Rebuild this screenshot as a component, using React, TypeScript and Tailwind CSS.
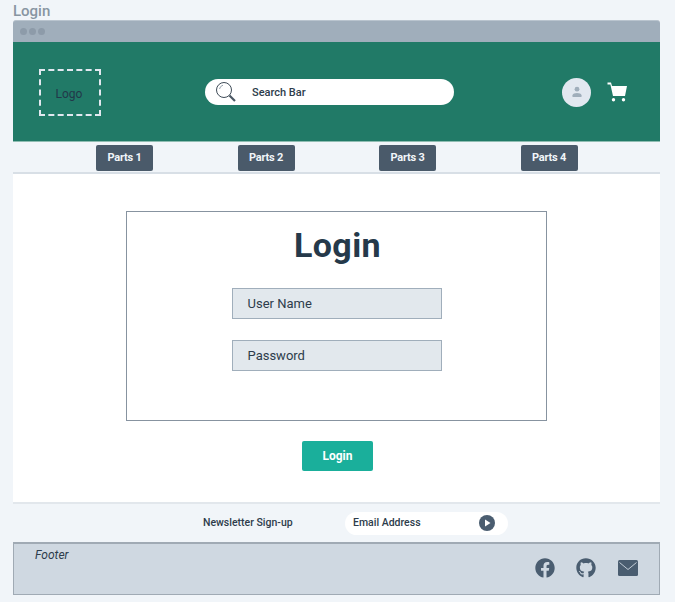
import React from 'react'
import { FaFacebook, FaGithub } from 'react-icons/fa'

const parts = ['Parts 1', 'Parts 2', 'Parts 3', 'Parts 4']

const SearchIcon = () => (
  <svg width="22" height="22" viewBox="0 0 22 22" fill="none">
    <circle cx="9" cy="9" r="7.5" stroke="#3f4c58" strokeWidth="1" />
    <path d="M4.5 8 A5 5 0 0 1 8 4.2" stroke="#9aa5af" strokeWidth="1" />
    <path d="M14.5 14.5 L20 20" stroke="#4a5763" strokeWidth="2.2" />
  </svg>
)

const CartIcon = () => (
  <svg width="20" height="20" viewBox="0 0 20 20" fill="#fff">
    <path d="M0.5 0.5 H4 L5 4 H20 L18 14 H6 L3.4 2.4 H0.5 Z" />
    <circle cx="6.5" cy="17.8" r="1.7" />
    <circle cx="16.5" cy="17.8" r="1.7" />
  </svg>
)

const UserIcon = () => (
  <svg width="12" height="12" viewBox="0 0 12 12" fill="#a0aebb">
    <circle cx="6" cy="3.2" r="2.4" />
    <path d="M1.5 11 V9.3 C1.5 7.8 4 7 6 7 C8 7 10.5 7.8 10.5 9.3 V11 Z" />
  </svg>
)

const MailIcon = () => (
  <svg width="20" height="16" viewBox="0 0 20 16">
    <rect width="20" height="16" rx="1.5" fill="#4a5d70" />
    <path d="M1.5 2.5 L10 9.5 L18.5 2.5" fill="none" stroke="#cfd8e1" strokeWidth="0.9" />
  </svg>
)

const PlayIcon = () => (
  <svg width="16" height="16" viewBox="0 0 16 16">
    <circle cx="8" cy="8" r="8" fill="#4a5d70" />
    <path d="M6 4.5 L11.5 8 L6 11.5 Z" fill="#fff" />
  </svg>
)

export default function App() {
  return (
    <div className="w-[675px] h-[602px] overflow-hidden bg-[#f1f5f9] pl-[13px] pr-[15px] font-['Roboto',sans-serif]">
      <div className="h-5 text-[15px] leading-[22px] font-medium text-[#8895a2]">Login</div>

      <div className="h-[22px] bg-[#a0aebb] rounded-t-[3px] border-t border-[#b9c4ce] flex items-center gap-[2px] pl-[7px] w-[647px]">
        <span className="w-[7px] h-[7px] rounded-full bg-[#8d9ba9]" />
        <span className="w-[7px] h-[7px] rounded-full bg-[#8d9ba9]" />
        <span className="w-[7px] h-[7px] rounded-full bg-[#8d9ba9]" />
      </div>

      <header className="h-[100px] bg-[#217a67] border-b border-[#8fbdb2] flex items-center pl-[26px]">
        <div className="w-[62px] h-[47px] mt-[1px] pt-[3px] pr-[2px] border-2 border-dashed border-[#e2e8f0] flex items-center justify-center text-[12px] text-[#22384a]">
          Logo
        </div>
        <div className="ml-[104px] mt-[1px] w-[249px] h-[26px] bg-white rounded-full flex items-center pl-[10px]">
          <SearchIcon />
          <span className="ml-[15px] pt-[2px] text-[11px] font-medium text-[#2d3c4b]">Search Bar</span>
        </div>
        <div className="ml-[108px] mt-[1px] w-[29px] h-[29px] rounded-full bg-[#e2e8f0] flex items-center justify-center">
          <UserIcon />
        </div>
        <div className="ml-[16px] mt-[1px]">
          <CartIcon />
        </div>
      </header>

      <nav className="h-[32px] bg-[#f1f5f9] border-b-2 border-[#d8dfe6] flex items-start pt-[3px] pl-[83px] gap-[85px]">
        {parts.map((p) => (
          <div
            key={p}
            className="w-[57px] h-[26px] -mr-[0.5px] bg-[#4a5a6a] rounded-[2px] flex items-center justify-center text-[11px] font-bold tracking-[-0.2px] text-[#f1f5f9]"
          >
            {p}
          </div>
        ))}
      </nav>

      <main className="h-[328px] bg-white flex flex-col items-center pt-[37px]">
        <div className="w-[421px] h-[210px] border border-[#8793a0] flex flex-col items-center">
          <h1 className="mt-[13px] ml-[2px] h-[40px] text-[34px] leading-[40px] tracking-[0.4px] font-bold text-[#25394a]">Login</h1>
          <div className="mt-[23px] w-[210px] h-[31px] bg-[#e2e8ed] border border-[#a0aebb] flex items-center pl-[15px] text-[13px] text-[#2d3c4b]">
            User Name
          </div>
          <div className="mt-[21px] w-[210px] h-[31px] bg-[#e2e8ed] border border-[#a0aebb] flex items-center pl-[15px] text-[13px] text-[#2d3c4b]">
            Password
          </div>
        </div>
        <button className="mt-5 ml-[2px] w-[71px] h-[30px] bg-[#1aaf9b] rounded-[2px] text-[12px] font-bold text-white">
          Login
        </button>
      </main>

      <section className="h-[40px] bg-[#f1f5f9] border-t-2 border-[#e2e7ec] flex items-center pl-[190px]">
        <span className="w-[90px] text-[10.5px] font-medium whitespace-nowrap text-[#2d3c4b]">Newsletter Sign-up</span>
        <div className="ml-[52px] w-[163px] h-[23px] bg-white rounded-full flex items-center justify-between pl-2 pr-[13px]">
          <span className="text-[10.5px] font-medium text-[#2d3c4b]">Email Address</span>
          <PlayIcon />
        </div>
      </section>

      <footer className="h-[53px] bg-[#cfd8e1] border border-t-2 border-[#a0aab4] flex justify-between pl-[21px] pr-[21px]">
        <span className="mt-[2px] text-[12px] italic text-[#2d3c4b]">Footer</span>
        <div className="flex items-center gap-[21px] text-[#4a5d70] mt-[-3px]">
          <FaFacebook size={20} />
          <FaGithub size={20} />
          <div className="ml-[1px]">
            <MailIcon />
          </div>
        </div>
      </footer>
    </div>
  )
}
